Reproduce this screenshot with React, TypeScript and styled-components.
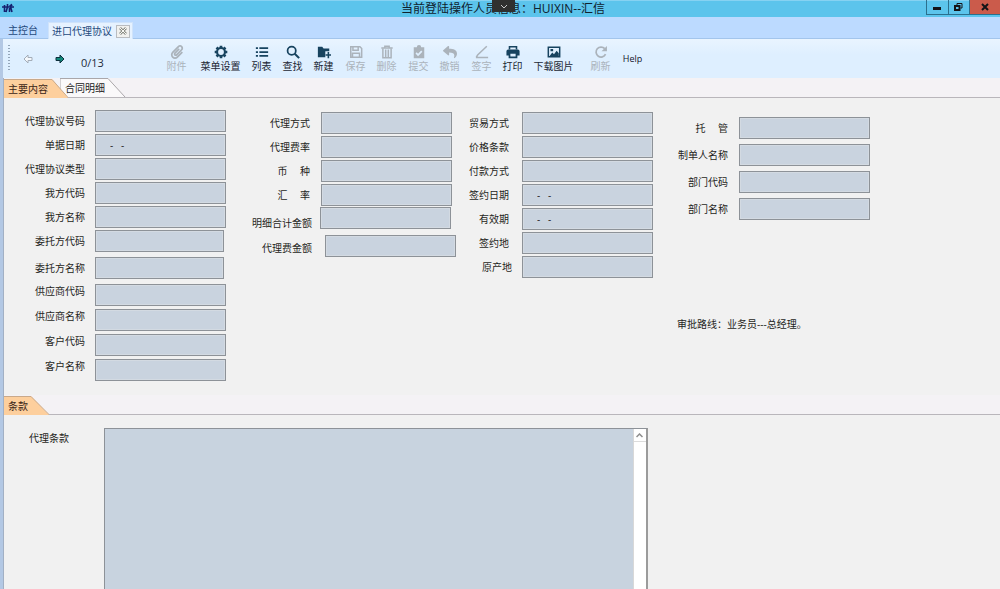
import React from "react";
import styled, { createGlobalStyle } from "styled-components";
import { FaPaperclip, FaReply } from "react-icons/fa";

const Global = createGlobalStyle`
  * { box-sizing: border-box; }
  body {
    margin: 0;
    background: #f1f1f1;
    color: #1f1f22;
    font: 10px/14px "Open Sans", "Noto Sans CJK SC", sans-serif;
  }
  button, input, textarea { font: inherit; color: inherit; margin: 0; padding: 0; border: 0; border-radius: 0; background: none; }
  svg { display: block; }
`;

const Window = styled.div`
  min-height: 100vh;
  display: flex;
  flex-direction: column;
  overflow: hidden;
`;

const TitleBar = styled.header`
  position: relative;
  height: 17px;
  display: flex;
  justify-content: space-between;
  align-items: flex-start;
  background: #5cc4ec;
  border-top: 1px solid #86d2f2;
`;

const Logo = styled.div`
  padding: 2px 0 0 2px;
  width: 74px;
`;

const Title = styled.h1`
  margin: 0;
  padding-left: 6px;
  font-size: 12px;
  line-height: 15px;
  font-weight: 400;
  color: #10222e;
`;

const PullTab = styled.button`
  position: absolute;
  left: 50%;
  top: -1px;
  width: 23px;
  height: 12px;
  margin-left: -8px;
  display: grid;
  place-items: center;
  background: #30302f;
  color: #c9c9c9;
`;

const WindowButtons = styled.div`
  display: flex;
  height: 15px;
  width: 74px;
  margin-top: -1px;
  border-left: 1px solid #2c6f8d;
  border-bottom: 1px solid #2c6f8d;
`;

const WindowButton = styled.button<{ $close?: boolean }>`
  flex: ${(p) => (p.$close ? "0 0 31px" : "1")};
  display: grid;
  place-items: center;
  background: ${(p) => (p.$close ? "#cb5b4b" : "transparent")};
  color: #141418;
  & + & { border-left: 1px solid #2c6f8d; }
`;

const DocumentTabs = styled.nav`
  height: 22px;
  display: flex;
  align-items: flex-end;
  padding-left: 4px;
  background: #bcdaff;
  border-bottom: 1px solid #a3c5ec;
`;

const DocumentTab = styled.div<{ $active?: boolean }>`
  display: flex;
  align-items: center;
  gap: 4px;
  height: 17px;
  margin-bottom: ${(p) => (p.$active ? "-1px" : "0")};
  padding: ${(p) => (p.$active ? "0 2px 0 3px" : "0 4px")};
  color: #24497c;
  background: ${(p) => (p.$active ? "#e6f2ff" : "transparent")};
  border: ${(p) => (p.$active ? "1px solid #cfe3fb" : "0")};
  border-bottom: 0;
  & + & { margin-left: 6px; }
`;

const TabLink = styled.a`
  color: inherit;
  text-decoration: none;
`;

const CloseTab = styled.button`
  width: 14px;
  height: 13px;
  display: grid;
  place-items: center;
  border: 1px solid #b9bcc0;
  background: #f1f1ef;
  color: #8b8d86;
`;

const Body = styled.div`
  flex: 1;
  display: flex;
  flex-direction: column;
  border-left: 3px solid #b3c8e4;
  box-shadow: inset 1px 0 0 #a2b0c4;
`;

const Toolbar = styled.div`
  height: 39px;
  display: flex;
  align-items: center;
  background: linear-gradient(#e9f4ff, #deefff 40%, #deefff);
  padding-left: 5px;
`;

const Grip = styled.div`
  width: 2px;
  height: 27px;
  background: repeating-linear-gradient(#93a5b8 0 1px, transparent 1px 3px);
`;

const Pager = styled.div`
  width: 151px;
  display: flex;
  align-items: center;
  padding-left: 13px;
`;

const PageButton = styled.button`
  width: 10px;
  height: 10px;
  margin-right: 22px;
`;

const Count = styled.span`
  font-size: 11px;
  padding: 8px 0 0;
  margin-left: -6px;
  color: #222c3a;
`;

const ToolGroup = styled.div<{ $gap: number }>`
  display: flex;
  margin-right: ${(p) => p.$gap}px;
`;

const Tool = styled.button<{ $wide?: boolean }>`
  width: ${(p) => (p.$wide ? 51 : 31)}px;
  display: flex;
  flex-direction: column;
  align-items: center;
  white-space: nowrap;
  color: #1c2733;
  svg { width: 14px; height: 14px; color: #17435f; }
  &:disabled, &:disabled svg { color: #abb3bb; }
`;

const HelpButton = styled.button`
  width: 31px;
  font-size: 9px;
  color: #14142c;
`;

const SectionTabs = styled.div`
  height: 20px;
  display: flex;
  align-items: flex-end;
  position: relative;
  border-bottom: 1px solid #b9b6bb;
  background: #f4f2f5;
  margin-left: 1px;
`;

const SectionTab = styled.button<{ $width: number; $active?: boolean }>`
  position: relative;
  width: ${(p) => p.$width}px;
  height: 19px;
  margin-bottom: ${(p) => (p.$active ? "-1px" : "0")};
  margin-right: -8px;
  z-index: ${(p) => (p.$active ? 1 : 0)};
  padding-left: ${(p) => (p.$active ? 4 : 5)}px;
  text-align: left;
  color: ${(p) => (p.$active ? "#3a2416" : "#222")};
`;

const TabShape = styled.svg`
  position: absolute;
  inset: 0;
  z-index: -1;
`;

const FormArea = styled.main`
  display: flex;
  align-items: flex-start;
  padding: 12px 0 14px;
`;

const Column = styled.div<{ $before: number; $top: number }>`
  margin-left: ${(p) => p.$before}px;
  padding-top: ${(p) => p.$top}px;
`;

const Group = styled.div<{ $gap: number; $after: number }>`
  display: flex;
  flex-direction: column;
  gap: ${(p) => p.$gap}px;
  margin-bottom: ${(p) => p.$after}px;
`;

const Row = styled.div<{ $gap: number }>`
  display: flex;
  align-items: flex-start;
  gap: ${(p) => p.$gap}px;
  height: 22px;
`;

const Label = styled.label<{ $width: number; $line: number }>`
  flex: 0 0 ${(p) => p.$width}px;
  line-height: ${(p) => p.$line}px;
  text-align: right;
  white-space: pre;
`;

const Box = styled.input<{ $width: number }>`
  width: ${(p) => p.$width}px;
  height: 22px;
  padding-left: 14px;
  border: 1px solid #8d9298;
  background: #c9d3df;
  box-shadow: inset 0 0 0 1px #d3dae2;
`;

const Route = styled.p`
  margin: 97px 0 0;
`;

const Terms = styled.section`
  flex: 1;
  display: flex;
  align-items: stretch;
  padding: 13px 0 0 26px;
`;

const TermsLabel = styled.label`
  width: 75px;
  line-height: 20px;
`;

const TermsBox = styled.div`
  flex: 0 0 56%;
  display: flex;
  min-height: 161px;
  border: 1px solid #8d9298;
  border-right: 2px solid #9b9b9b;
  border-bottom: 0;
`;

const TermsText = styled.textarea`
  flex: 1;
  resize: none;
  outline: 0;
  overflow: hidden;
  background: #c8d3df;
`;

const ScrollTrack = styled.div`
  width: 13px;
  border-left: 1px solid #d8d8d8;
  background: #fff;
`;

const ScrollUp = styled.button`
  width: 12px;
  height: 13px;
  display: grid;
  place-items: center;
  border-bottom: 1px solid #dcdcdc;
  color: #8f8f8f;
`;

type IconProps = { children: React.ReactNode };
const Glyph = ({ children }: IconProps) => (
  <svg viewBox="0 0 16 16" fill="none" stroke="currentColor" strokeWidth="2">{children}</svg>
);

const Gear = () => (
  <Glyph>
    <circle cx="8" cy="8" r="4.5" strokeWidth="2.4" />
    <path strokeWidth="3" d="M8 .8v2.4M8 12.8v2.4M.8 8h2.4M12.8 8h2.4M2.9 2.9l1.7 1.7M11.4 11.4l1.7 1.7M2.9 13.1l1.7-1.7M11.4 4.6l1.7-1.7" />
  </Glyph>
);
const List = () => (
  <Glyph><path d="M1 3.5h2.4M5 3.5h10M1 8h2.4M5 8h10M1 12.5h2.4M5 12.5h10" /></Glyph>
);
const Find = () => (
  <Glyph><circle cx="6.5" cy="6.5" r="4.7" /><path strokeWidth="2.4" d="M10 10l5 5" /></Glyph>
);
const NewFolder = () => (
  <Glyph>
    <path fill="currentColor" stroke="none" d="M1 2h5l1.5 2H14v3H9.5v7H1z" />
    <path strokeWidth="1.8" d="M13 8v7M9.8 11.5H16" />
  </Glyph>
);
const Save = () => (
  <Glyph><path strokeWidth="1.7" d="M2 2h10.5L14.5 4v10H2zM4.5 2v4h6V2M4 14V9.5h8V14" /></Glyph>
);
const Bin = () => (
  <Glyph>
    <path strokeWidth="1.6" d="M1.5 3.5h13M5.5 3V1.5h5V3" />
    <path strokeWidth="1.7" d="M3.3 4v10.5h9.4V4M6.5 5v9M9.5 5v9" />
  </Glyph>
);
const Submit = () => (
  <Glyph>
    <path fill="currentColor" stroke="none" fillRule="evenodd" d="M2 2.5h3.5a2.5 2.5 0 0 1 5 0H14V15H2zM6.9 12.8l5-5-1.4-1.4-3.6 3.5-1.5-1.5L4 9.8z" />
  </Glyph>
);
const Sign = () => (
  <Glyph><path strokeWidth="1.7" d="M1 14.2h14M13.5 1.5L3 11.5l-1.5 2.5" /></Glyph>
);
const Print = () => (
  <Glyph>
    <path strokeWidth="1.8" d="M4 5V2h8v3" />
    <path fill="currentColor" stroke="none" fillRule="evenodd" d="M2.5 5h11A2 2 0 0 1 15.5 7v5H13v3H3v-3H.5V7a2 2 0 0 1 2-2zM5 10v3h6v-3z" />
  </Glyph>
);
const Picture = () => (
  <Glyph>
    <path strokeWidth="1.7" d="M1.5 2.5h13v11h-13z" />
    <path fill="currentColor" stroke="none" d="M3 12.5l3-4 2 2 3-4 2.5 3v3zM4 4.5h3V7H4z" />
  </Glyph>
);
const Refresh = () => (
  <Glyph>
    <path d="M13.2 10.5A5.7 5.7 0 1 1 12.3 4.2" />
    <path fill="currentColor" stroke="none" d="M14.8 1v6.2H8.6z" />
  </Glyph>
);

type ToolItem = { name: string; icon: React.ReactNode; off?: boolean; wide?: boolean };
const toolGroups: { gap: number; items: ToolItem[] }[] = [
  { gap: 3, items: [{ name: "附件", icon: <FaPaperclip />, off: true }] },
  {
    gap: 1,
    items: [
      { name: "菜单设置", icon: <Gear />, wide: true },
      { name: "列表", icon: <List /> },
      { name: "查找", icon: <Find /> },
      { name: "新建", icon: <NewFolder /> },
    ],
  },
  { gap: 1, items: [{ name: "保存", icon: <Save />, off: true }, { name: "删除", icon: <Bin />, off: true }] },
  { gap: 1, items: [{ name: "提交", icon: <Submit />, off: true }, { name: "撤销", icon: <FaReply />, off: true }] },
  {
    gap: 6,
    items: [
      { name: "签字", icon: <Sign />, off: true },
      { name: "打印", icon: <Print /> },
      { name: "下载图片", icon: <Picture />, wide: true },
    ],
  },
  { gap: 1, items: [{ name: "刷新", icon: <Refresh />, off: true }] },
];

type FieldItem = { name: string; value?: string; width?: number; line?: number; label?: number; space?: number };
type FieldGroup = { gap: number; after: number; fields: FieldItem[] };
type FieldColumn = { before: number; top: number; label: number; space: number; groups: FieldGroup[] };

const EMPTY_DATE = "-   -";

const columns: FieldColumn[] = [
  {
    before: 0, top: 0, label: 82, space: 10,
    groups: [
      {
        gap: 2, after: 5,
        fields: [
          { name: "代理协议号码" },
          { name: "单据日期", value: EMPTY_DATE },
          { name: "代理协议类型" },
          { name: "我方代码" },
          { name: "我方名称" },
          { name: "委托方代码", width: 129 },
        ],
      },
      { gap: 2, after: 5, fields: [{ name: "委托方名称", width: 129 }] },
      {
        gap: 3, after: 0,
        fields: [
          { name: "供应商代码", line: 14 },
          { name: "供应商名称", line: 14 },
          { name: "客户代码", line: 14 },
          { name: "客户名称", line: 14 },
        ],
      },
    ],
  },
  {
    before: 24, top: 2, label: 60, space: 11,
    groups: [
      { gap: 2, after: 1, fields: [{ name: "代理方式" }, { name: "代理费率" }, { name: "币　 种" }, { name: "汇　 率" }] },
      { gap: 2, after: 6, fields: [{ name: "明细合计金额", line: 32, label: 62, space: 8 }] },
      { gap: 2, after: 0, fields: [{ name: "代理费金额", line: 26, label: 62, space: 13 }] },
    ],
  },
  {
    before: 12, top: 2, label: 41, space: 13,
    groups: [
      {
        gap: 2, after: 0,
        fields: [
          { name: "贸易方式" },
          { name: "价格条款" },
          { name: "付款方式" },
          { name: "签约日期", value: EMPTY_DATE },
          { name: "有效期", value: EMPTY_DATE },
          { name: "签约地" },
          { name: "原产地", label: 44, space: 10 },
        ],
      },
    ],
  },
  {
    before: 24, top: 7, label: 51, space: 11,
    groups: [
      { gap: 5, after: 0, fields: [{ name: "托　 管" }, { name: "制单人名称" }, { name: "部门代码" }, { name: "部门名称" }] },
    ],
  },
];

export default function App() {
  return (
    <Window>
      <Global />
      <TitleBar>
        <Logo>
          <svg width="12" height="10" viewBox="0 0 12 10" fill="none" stroke="#15206f" strokeWidth="1.6">
            <path d="M0 4h12M2.5 2v7M5.5 1v3L4 9M8 2l2 7M7.5 5v4M9 1l1 2" />
          </svg>
        </Logo>
        <Title>当前登陆操作人员信息：HUIXIN--汇信</Title>
        <PullTab aria-label="展开">
          <svg width="8" height="5" viewBox="0 0 8 5" fill="none" stroke="currentColor"><path d="M1 1l3 3 3-3" /></svg>
        </PullTab>
        <WindowButtons>
          <WindowButton aria-label="最小化">
            <svg width="8" height="8" viewBox="0 0 8 8"><path fill="currentColor" d="M0 4h8v3H0z" /></svg>
          </WindowButton>
          <WindowButton aria-label="还原">
            <svg width="9" height="8" viewBox="0 0 9 8" fill="none" stroke="currentColor"><path d="M3 2V.5h5V5H6.5" /><path strokeWidth="2" d="M1 3h4.5v4H1z" /></svg>
          </WindowButton>
          <WindowButton $close aria-label="关闭">
            <svg width="8" height="8" viewBox="0 0 8 8" fill="none" stroke="currentColor" strokeWidth="2"><path d="M1 1l6 6M7 1L1 7" /></svg>
          </WindowButton>
        </WindowButtons>
      </TitleBar>

      <DocumentTabs>
        <DocumentTab><TabLink href="#console">主控台</TabLink></DocumentTab>
        <DocumentTab $active>
          <TabLink href="#agreement">进口代理协议</TabLink>
          <CloseTab aria-label="关闭标签">
            <svg width="8" height="8" viewBox="0 0 8 8" fill="none" stroke="currentColor"><path strokeWidth="2.6" d="M1 1l6 6M7 1L1 7" /><path stroke="#f8f8f4" d="M1 1l6 6M7 1L1 7" /></svg>
          </CloseTab>
        </DocumentTab>
      </DocumentTabs>

      <Body>
        <Toolbar>
          <Grip />
          <Pager>
            <PageButton aria-label="上一条">
              <svg width="10" height="10" viewBox="0 0 10 10" fill="#f4f8fc" stroke="#a4adb8"><path d="M1 5l4-4v2.5h4v3H5V9z" /></svg>
            </PageButton>
            <PageButton aria-label="下一条">
              <svg width="10" height="10" viewBox="0 0 10 10" fill="#128a7c" stroke="#0d2f3c"><path d="M9 5L5 1v2.5H1v3h4V9z" /></svg>
            </PageButton>
            <Count>0/13</Count>
          </Pager>
          {toolGroups.map((group, i) => (
            <ToolGroup key={i} $gap={group.gap}>
              {group.items.map((t) => (
                <Tool key={t.name} $wide={t.wide} disabled={t.off}>
                  {t.icon}
                  {t.name}
                </Tool>
              ))}
            </ToolGroup>
          ))}
          <HelpButton>Help</HelpButton>
        </Toolbar>

        <SectionTabs>
          <SectionTab $active $width={64}>
            <TabShape width="64" height="19" viewBox="0 0 64 19" fill="#fdcf9d" stroke="#c9a98a">
              <path stroke="none" d="M0 0h48l16 19H0z" />
              <path fill="none" d="M0 .5h48l16 18" />
            </TabShape>
            主要内容
          </SectionTab>
          <SectionTab $width={72}>
            <TabShape width="72" height="19" viewBox="0 0 72 19" fill="#faf9fa" stroke="#aaa7aa">
              <path d="M0 19V.5h48L65 19" />
            </TabShape>
            合同明细
          </SectionTab>
        </SectionTabs>

        <FormArea>
          {columns.map((column, c) => (
            <Column key={c} $before={column.before} $top={column.top}>
              {column.groups.map((group, g) => (
                <Group key={g} $gap={group.gap} $after={group.after}>
                  {group.fields.map((f) => (
                    <Row key={f.name} $gap={f.space ?? column.space}>
                      <Label htmlFor={f.name} $width={f.label ?? column.label} $line={f.line ?? 22}>{f.name}</Label>
                      <Box id={f.name} $width={f.width ?? 131} defaultValue={f.value} />
                    </Row>
                  ))}
                </Group>
              ))}
              {c === 3 && <Route>审批路线：业务员---总经理。</Route>}
            </Column>
          ))}
        </FormArea>

        <SectionTabs>
          <SectionTab $active $width={45}>
            <TabShape width="45" height="19" viewBox="0 0 45 19" fill="#fdcf9d" stroke="#c9a98a">
              <path stroke="none" d="M0 0h27l18 19H0z" />
              <path fill="none" d="M0 .5h27l18 18" />
            </TabShape>
            条款
          </SectionTab>
        </SectionTabs>

        <Terms>
          <TermsLabel htmlFor="terms">代理条款</TermsLabel>
          <TermsBox>
            <TermsText id="terms" />
            <ScrollTrack>
              <ScrollUp aria-label="向上滚动">
                <svg width="7" height="5" viewBox="0 0 7 5" fill="none" stroke="currentColor" strokeWidth="1.5"><path d="M.5 4l3-3 3 3" /></svg>
              </ScrollUp>
            </ScrollTrack>
          </TermsBox>
        </Terms>
      </Body>
    </Window>
  );
}
